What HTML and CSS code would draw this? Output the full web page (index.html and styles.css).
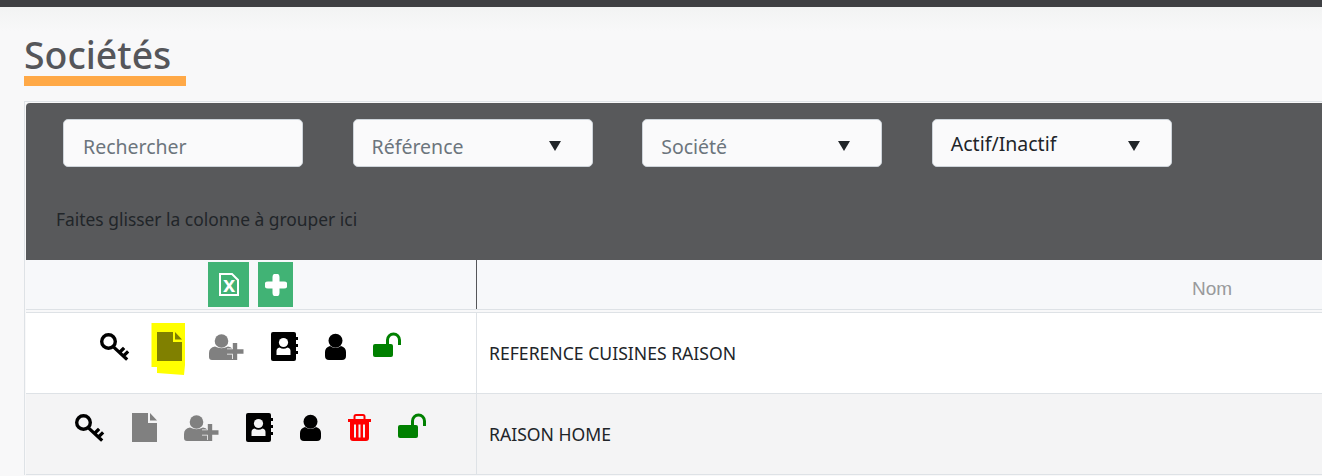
FILE: index.html
```html
<!DOCTYPE html>
<html lang="fr">

<head>
    <meta charset="UTF-8">
    <meta name="viewport" content="width=device-width, initial-scale=1.0">
    <title>Sociétés</title>
    <link rel="stylesheet" href="styles.css">
</head>

<body>
    <svg class="defs" width="0" height="0">
        <symbol id="i-key" viewBox="0 0 30 29">
            <g fill="none" stroke="currentColor" stroke-width="3.400" stroke-linecap="square">
                <circle cx="8.500" cy="9.500" r="6.800" />
                <path d="M13.500 15 26 26.500M19.500 20.500 23 17M23.500 24 27 20.500" stroke-width="3.200" />
            </g>
        </symbol>
        <symbol id="i-file" viewBox="0 0 25 29">
            <path d="M0 0H16V10H25V29H0z" fill="currentColor" />
            <path d="M18 0 25 7.500H18z" fill="currentColor" />
        </symbol>
        <symbol id="i-user-plus" viewBox="0 0 35 28">
            <circle cx="12.500" cy="8" r="6.800" fill="currentColor" />
            <path d="M0 24V20Q0 14.500 6 13.500Q12.500 17 19 13.500Q25 14.500 25 20V27H3Q0 27 0 24z" fill="currentColor" />
            <path d="M26 11V26M18 18.500H34" stroke="var(--row-bg)" stroke-width="6" fill="none" />
            <path d="M26 10V27M17.500 18.500H34.500" stroke="currentColor" stroke-width="4.400" fill="none" />
        </symbol>
        <symbol id="i-book" viewBox="0 0 27 29">
            <rect width="25" height="29" rx="2" fill="currentColor" />
            <path d="M25 5h2v3h-2zM25 12h2v3h-2zM25 19h2v3h-2z" fill="currentColor" />
            <circle cx="12.500" cy="10.500" r="4.600" fill="var(--row-bg)" />
            <path d="M5.500 23V19Q5.500 16 8.500 15.500Q12.500 18 16.500 15.500Q19.500 16 19.500 19V23z" fill="var(--row-bg)" />
        </symbol>
        <symbol id="i-user" viewBox="0 0 21 27">
            <circle cx="10.500" cy="7.800" r="7" fill="currentColor" />
            <path d="M0 23V19Q0 14.500 5 13Q10.500 17 16 13Q21 14.500 21 19V23Q21 27 17 27H4Q0 27 0 23z" fill="currentColor" />
        </symbol>
        <symbol id="i-trash" viewBox="0 0 23 28">
            <path d="M6.500 6V2.500Q6.500 1 8 1H15Q16.500 1 16.500 2.500V6" fill="none" stroke="currentColor" stroke-width="2" />
            <path d="M0 5H23V8H21V24Q21 27 18 27H5Q2 27 2 24V8H0z" fill="currentColor" />
            <path d="M6 10.500h2v13H6zM10.500 10.500h2v13h-2zM15 10.500h2v13h-2z" fill="var(--row-bg)" />
        </symbol>
        <symbol id="i-unlock" viewBox="0 0 28 25">
            <rect y="12" width="20" height="13" rx="2" fill="currentColor" />
            <path d="M14.500 13V8A6 6 0 0 1 26.500 8V13" fill="none" stroke="currentColor" stroke-width="3" />
        </symbol>
    </svg>

    <div class="topbar"></div>

    <main class="page">
        <h1 class="title">Sociétés</h1>

        <section class="card">
            <div class="panel">
                <div class="filters">
                    <input class="field search" type="text" placeholder="Rechercher">
                    <div class="field select muted">Référence<span class="caret"></span></div>
                    <div class="field select muted">Société<span class="caret"></span></div>
                    <div class="field select">Actif/Inactif<span class="caret"></span></div>
                </div>
                <p class="group-hint">Faites glisser la colonne à grouper ici</p>
            </div>

            <div class="head-row">
                <div class="head-actions">
                    <button class="tool tool-excel" type="button" aria-label="Excel">
                        <svg width="20" height="23" viewBox="0 0 20 23">
                            <path d="M1 1H13L19 7V22H1z" fill="none" stroke="#fff" stroke-width="2" />
                            <text class="excel-x" x="10" y="19" text-anchor="middle">x</text>
                        </svg>
                    </button>
                    <button class="tool tool-add" type="button" aria-label="Ajouter">
                        <svg width="22" height="22" viewBox="0 0 22 22">
                            <path d="M11 3V19M3 11H19" stroke="#fff" stroke-width="7" stroke-linecap="round" fill="none" />
                        </svg>
                    </button>
                </div>
                <div class="head-name">Nom</div>
            </div>

            <div class="row">
                <div class="row-actions">
                    <svg class="icon key"><use href="#i-key" /></svg>
                    <svg class="icon file marked" viewBox="0 0 25 29">
                        <path class="marker" d="M-5.500-9H28V33L27 43 0 41V35H-5.500z" />
                        <use href="#i-file" width="25" height="29" />
                    </svg>
                    <svg class="icon user-plus"><use href="#i-user-plus" /></svg>
                    <svg class="icon book"><use href="#i-book" /></svg>
                    <svg class="icon user"><use href="#i-user" /></svg>
                    <svg class="icon unlock"><use href="#i-unlock" /></svg>
                </div>
                <div class="row-name">REFERENCE CUISINES RAISON</div>
            </div>

            <div class="row row-alt">
                <div class="row-actions">
                    <svg class="icon key"><use href="#i-key" /></svg>
                    <svg class="icon file"><use href="#i-file" /></svg>
                    <svg class="icon user-plus"><use href="#i-user-plus" /></svg>
                    <svg class="icon book"><use href="#i-book" /></svg>
                    <svg class="icon user"><use href="#i-user" /></svg>
                    <svg class="icon trash"><use href="#i-trash" /></svg>
                    <svg class="icon unlock"><use href="#i-unlock" /></svg>
                </div>
                <div class="row-name">RAISON HOME</div>
            </div>
        </section>
    </main>
</body>

</html>
```

FILE: styles.css
```css
html,
body {
    margin: 0;
    height: 476px;
    overflow: hidden;
}

body {
    font-family: "Noto Sans", sans-serif;
    background-color: #f8f8f9;
    color: #212529;
}

.defs {
    display: block;
    height: 0;
}

.topbar {
    height: 7px;
    background: #3f4043;
}

.page {
    padding: 0 0 0 24px;
    background: linear-gradient(#f2f3f3, #f8f8f9 24px);
}

.title {
    display: inline-block;
    margin: 27px 0 15px;
    padding-right: 15px;
    height: 52px;
    box-sizing: border-box;
    font-size: 37.400px;
    font-weight: 500;
    line-height: 42px;
    color: #55565a;
    border-bottom: 10px solid #ffa947;
}

.card {
    width: 2000px;
    border: 1px solid #dee2e6;
    border-width: 1px 0 0 1px;
    padding: 1px 0 0 1px;
}

.panel {
    height: 157px;
    box-sizing: border-box;
    padding: 16px 0 0 37px;
    background: #58595b;
    border-top-left-radius: 4px;
}

.filters {
    display: flex;
    gap: 49.600px;
}

.field {
    width: 240px;
    height: 48px;
    box-sizing: border-box;
    margin: 0;
    padding: 1px 18px 0;
    display: flex;
    align-items: center;
    font-family: inherit;
    font-size: 19.500px;
    color: #212529;
    background: #fafafb;
    border: 1px solid #ced4da;
    border-radius: 5px;
    outline: none;
}

.search {
    padding-left: 19px;
}

.search,
.muted {
    padding-top: 7px;
}

.search::placeholder,
.muted {
    color: #6c757d;
}

.select {
    position: relative;
}

.caret {
    position: absolute;
    left: 195px;
    top: 21px;
    border-style: solid;
    border-width: 10px 6px 0;
    border-color: #212529 transparent transparent;
}

.group-hint {
    margin: 40px 0 0 -7px;
    font-size: 17.400px;
    line-height: 24px;
    color: #212529;
}

.head-row {
    display: flex;
    height: 49px;
    background: #f7f8fa;
    border-bottom: 1px solid #dee2e6;
}

.head-actions {
    width: 451px;
    box-sizing: border-box;
    padding: 2px 1px 0 0;
    display: flex;
    justify-content: center;
    gap: 9px;
    border-right: 1px solid #55565a;
}

.tool {
    height: 45px;
    padding: 0;
    border: 0;
    display: flex;
    align-items: center;
    justify-content: center;
    background: #41b375;
}

.tool-excel {
    width: 41px;
}

.tool-add {
    width: 35px;
}

.excel-x {
    font-family: "Liberation Sans", sans-serif;
    font-size: 22px;
    font-weight: 700;
    fill: #fff;
}

.head-name {
    width: 1470px;
    padding-top: 18px;
    text-align: center;
    font-family: "Liberation Sans", sans-serif;
    font-size: 19px;
    line-height: 22px;
    color: #999a9c;
}

.row {
    --row-bg: #fff;
    display: flex;
    height: 80px;
    background: var(--row-bg);
    border-bottom: 1px solid #dee2e6;
}

.head-row + .row {
    margin-top: 2px;
    border-top: 1px solid #dee2e6;
}

.row-alt {
    --row-bg: #f4f4f5;
}

.row-actions {
    width: 451px;
    box-sizing: border-box;
    padding: 19px 1px 0 0;
    display: flex;
    justify-content: center;
    gap: 27px;
    border-right: 1px solid #dee2e6;
}

.row-name {
    padding-left: 12px;
    display: flex;
    align-items: center;
    font-size: 17.600px;
}

.icon {
    height: 29px;
    flex: none;
    color: #000;
    overflow: visible;
}

.key {
    width: 30px;
}

.file {
    width: 25px;
    color: #808080;
}

.user-plus {
    width: 35px;
    height: 28px;
    margin-top: 1px;
    color: #808080;
}

.book {
    width: 27px;
}

.user {
    width: 21px;
    height: 27px;
    margin-top: 1px;
}

.trash {
    width: 23px;
    height: 28px;
    margin-top: 1px;
    color: #f00;
}

.unlock {
    width: 28px;
    height: 25px;
    color: #008000;
}

.marked {
    color: #808000;
}

.marker {
    fill: #ff0;
}
```
